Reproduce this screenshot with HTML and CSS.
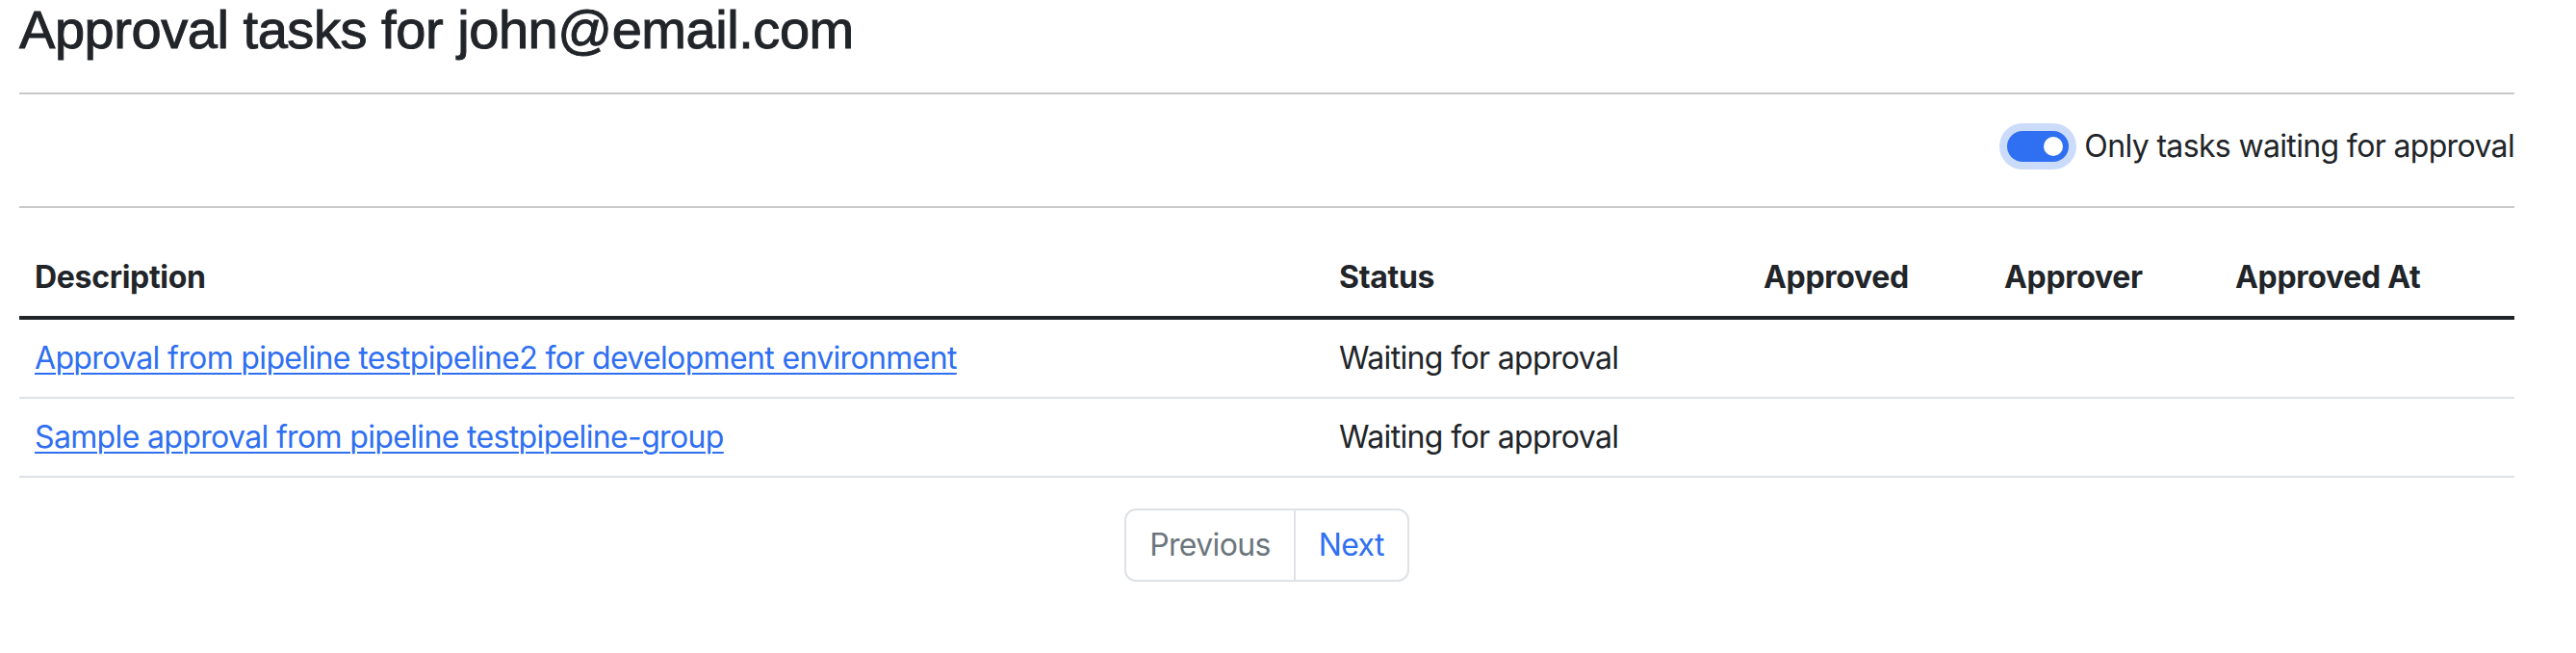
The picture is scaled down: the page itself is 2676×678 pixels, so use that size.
FILE: index.html
```html
<!DOCTYPE html>
<html lang="en">
<head>
<meta charset="utf-8">
<title>Approval tasks</title>
<link rel="stylesheet" href="styles.css">
</head>
<body>
<main class="page">
  <h3 class="title">Approval tasks for john@email.com</h3>
  <hr class="rule">
  <div class="filter-row">
    <label class="switch">
      <span class="switch-track"><span class="switch-knob"></span></span>
      <span class="switch-label">Only tasks waiting for approval</span>
    </label>
  </div>
  <hr class="rule">
  <table class="tasks">
    <colgroup>
      <col class="c-desc">
      <col class="c-status">
      <col class="c-approved">
      <col class="c-approver">
      <col class="c-at">
    </colgroup>
    <thead>
      <tr>
        <th>Description</th>
        <th>Status</th>
        <th>Approved</th>
        <th>Approver</th>
        <th>Approved At</th>
      </tr>
    </thead>
    <tbody>
      <tr>
        <td><a class="task-link" href="#">Approval from pipeline testpipeline2 for development environment</a></td>
        <td>Waiting for approval</td>
        <td></td>
        <td></td>
        <td></td>
      </tr>
      <tr>
        <td><a class="task-link" href="#">Sample approval from pipeline testpipeline-group</a></td>
        <td>Waiting for approval</td>
        <td></td>
        <td></td>
        <td></td>
      </tr>
    </tbody>
  </table>
  <nav class="pager">
    <ul class="pagination">
      <li class="page-item disabled"><span class="page-link">Previous</span></li>
      <li class="page-item"><a class="page-link active-link" href="#">Next</a></li>
    </ul>
  </nav>
</main>
</body>
</html>
```
FILE: styles.css
```css
html, body {
  margin: 0;
  padding: 0;
  background: #ffffff;
}

body {
  font-family: Inter, "Noto Sans", "Liberation Sans", sans-serif;
  font-size: 32px;
  line-height: 1.5;
  letter-spacing: -0.65px;
  color: #212529;
}

.page {
  width: 2592px;
  padding-left: 20px;
  padding-top: 0;
}

.title {
  margin: -3px 0 16px 0;
  font-family: "Liberation Sans", Arial, sans-serif;
  font-size: 56px;
  font-weight: 400;
  line-height: 1.2;
  letter-spacing: -0.45px;
  -webkit-text-stroke: 1px #212529;
}

.rule {
  margin: 32px 0;
  border: 0;
  border-top: 2px solid #c8c9ca;
  height: 0;
}

.filter-row {
  display: flex;
  justify-content: flex-end;
  margin-top: -2px;
  padding-bottom: 6px;
}

.switch {
  display: flex;
  align-items: center;
  gap: 16px;
  height: 48px;
}

.switch-track {
  position: relative;
  width: 64px;
  height: 32px;
  box-sizing: border-box;
  border-radius: 16px;
  background: #2f6ff1;
  box-shadow: 0 0 0 8px #cbdcfb;
}

.switch-knob {
  position: absolute;
  right: 6px;
  top: 6px;
  width: 20px;
  height: 20px;
  border-radius: 50%;
  background: #ffffff;
}

.switch-label {
  font-size: 32px;
  line-height: 48px;
  color: #212529;
}

.tasks {
  width: 2592px;
  border-collapse: collapse;
  table-layout: fixed;
  margin-bottom: 32px;
}

.c-desc { width: 1355px; }
.c-status { width: 441px; }
.c-approved { width: 250px; }
.c-approver { width: 240px; }
.c-at { width: 306px; }

.tasks th,
.tasks td {
  padding: 16px;
  text-align: left;
  vertical-align: top;
  line-height: 48px;
  border-bottom: 2px solid #dee2e6;
}

.tasks th {
  font-weight: 700;
  letter-spacing: -0.3px;
  border-bottom: 4px solid #212529;
}

.task-link {
  color: #2f6ff1;
  text-decoration: underline;
  text-decoration-thickness: 2px;
  text-underline-offset: 4px;
}

.pager {
  display: flex;
  justify-content: center;
}

.pagination {
  display: flex;
  list-style: none;
  margin: 0;
  padding: 0;
}

.page-link {
  display: block;
  padding: 12px 24px;
  font-size: 32px;
  line-height: 48px;
  text-decoration: none;
  border: 2px solid #dee2e6;
  background: #ffffff;
}

.page-item:first-child .page-link {
  color: #6c757d;
  border-radius: 12px 0 0 12px;
}

.page-item:last-child .page-link {
  color: #2f6ff1;
  margin-left: -2px;
  border-radius: 0 12px 12px 0;
}
```
